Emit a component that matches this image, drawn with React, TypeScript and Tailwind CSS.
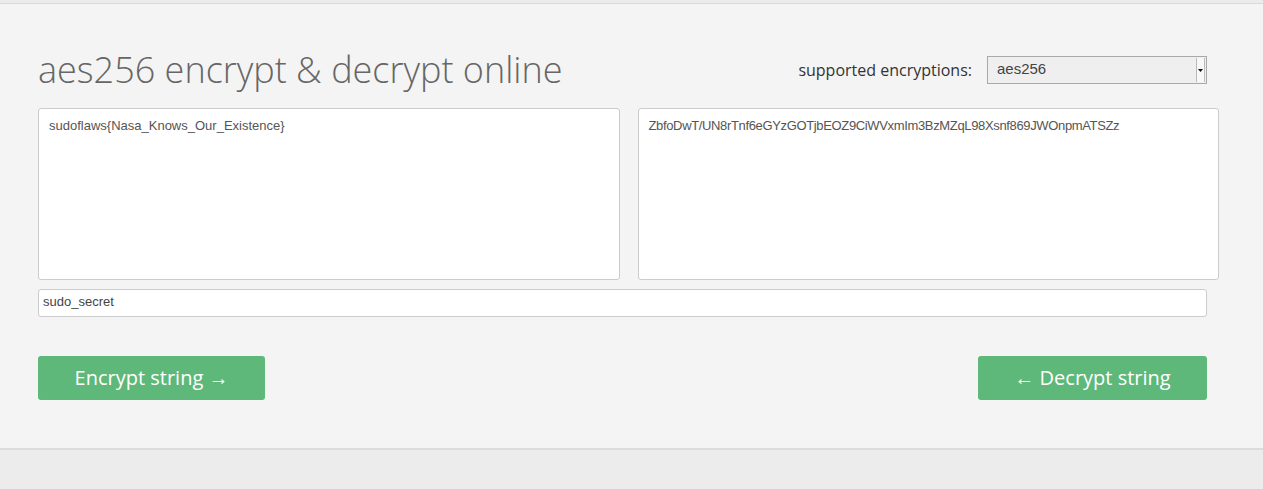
export default function App() {
  return (
    <div className="min-h-[489px] bg-[#ececec] font-['Open_Sans',sans-serif]">
      <div className="h-[3px] bg-[#ebebeb]" />
      <div className="border-t border-[#d9d9d9]">
        <main className="h-[446px] border-b-2 border-[#dcdcdc] bg-[#f4f4f4] pl-[38px] pr-[44px] pt-[42px]">
          <div className="flex items-start justify-between">
            <h1 className="text-[36px] font-light leading-[48px] text-[#666]">
              aes256 encrypt &amp; decrypt online
            </h1>
            <div className="mr-[12px] mt-[10px] flex items-center gap-[15px]">
              <span className="text-[16px] text-[#333]">supported encryptions:</span>
              <div className="flex h-[28px] w-[220px] items-start border border-[#a9a9a9] bg-[#efefef] font-['Liberation_Sans',sans-serif] text-[15px] text-[#444]">
                <span className="flex-1 pl-[9px] pt-[1px]">aes256</span>
                <span className="mr-[1px] mt-[1px] flex h-[24px] w-[9px] items-center justify-center border-l border-r border-[#bbb] bg-[#f8f8f8]">
                  <svg width="5" height="3" viewBox="0 0 5 3">
                    <path d="M0 0h5L2.5 3z" fill="#111" />
                  </svg>
                </span>
              </div>
            </div>
          </div>

          <div className="mt-[14px] grid grid-cols-2 gap-[18px]">
            <div className="h-[172px] rounded-[3px] border border-[#ccc] bg-white px-[10px] py-[7px] font-['Liberation_Sans',sans-serif] text-[13px] text-[#555]">
              sudoflaws{"{"}Nasa_Knows_Our_Existence{"}"}
            </div>
            <div className="h-[172px] rounded-[3px] border border-[#ccc] bg-white px-[10px] py-[7px] font-['Liberation_Sans',sans-serif] text-[13px] tracking-[-0.35px] text-[#555]">
              ZbfoDwT/UN8rTnf6eGYzGOTjbEOZ9CiWVxmIm3BzMZqL98Xsnf869JWOnpmATSZz
            </div>
          </div>

          <div className="mr-[12px] mt-[9px] h-[28px] rounded-[3px] border border-[#ccc] bg-white px-[4px] pt-[4px] font-['Liberation_Sans',sans-serif] text-[13px] leading-[16px] text-[#444]">
            sudo_secret
          </div>

          <div className="mr-[12px] mt-[39px] flex justify-between">
            <button className="h-[44px] w-[227px] rounded-[3px] bg-[#5db87a] text-[20px] text-white">
              Encrypt string →
            </button>
            <button className="h-[44px] w-[229px] rounded-[3px] bg-[#5db87a] text-[20px] text-white">
              ← Decrypt string
            </button>
          </div>
        </main>
      </div>
    </div>
  );
}
